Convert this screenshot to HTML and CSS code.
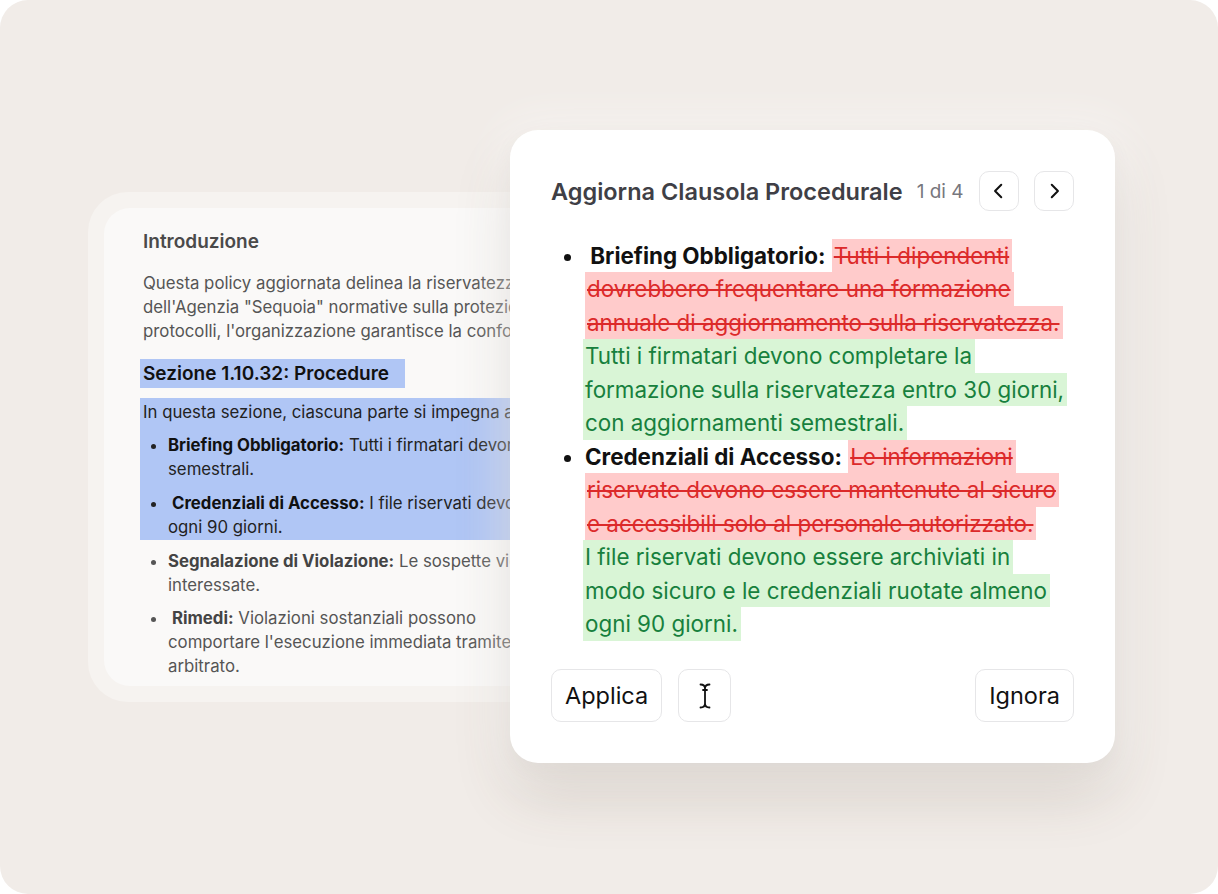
FILE: index.html
```html
<!DOCTYPE html>
<html lang="it">
<head>
<meta charset="utf-8">
<title>Aggiorna Clausola Procedurale</title>
<link rel="stylesheet" href="styles.css">
</head>
<body>
<div class="stage">
  <div class="doc-halo">
    <div class="doc">
      <h3 class="doc-title">Introduzione</h3>
      <p class="doc-p">Questa policy aggiornata delinea la riservatezza dei dati e gli obblighi<br>dell'Agenzia "Sequoia" normative sulla protezione delle informazioni. Con questi<br>protocolli, l'organizzazione garantisce la conformità alle norme vigenti.</p>
      <div class="sel-head">Sezione 1.10.32: Procedure</div>
      <div class="sel-block">
        <p class="doc-line">In questa sezione, ciascuna parte si impegna a rispettare le seguenti regole:</p>
        <ul class="doc-list">
          <li><b>Briefing Obbligatorio:</b> Tutti i firmatari devono completare la formazione<br>semestrali.</li>
          <li><b>&nbsp;Credenziali di Accesso:</b> I file riservati devono essere archiviati in modo<br>ogni 90 giorni.</li>
        </ul>
      </div>
      <ul class="doc-list muted">
        <li><b>Segnalazione di Violazione:</b> Le sospette violazioni devono essere notificate<br>interessate.</li>
        <li><b>&nbsp;Rimedi:</b> Violazioni sostanziali possono<br>comportare l'esecuzione immediata tramite un<br>arbitrato.</li>
      </ul>
    </div>
  </div>

  <div class="modal">
    <div class="modal-head">
      <h2 class="modal-title">Aggiorna Clausola Procedurale</h2>
      <span class="counter">1 di 4</span>
      <div class="nav">
        <button class="icon-btn" aria-label="Precedente">
          <svg width="18" height="18" viewBox="0 0 16 16"><path d="M10 2.5 L4.5 8 L10 13.5" fill="none" stroke="#111" stroke-width="1.8" stroke-linecap="round" stroke-linejoin="round"/></svg>
        </button>
        <button class="icon-btn" aria-label="Successivo">
          <svg width="18" height="18" viewBox="0 0 16 16"><path d="M6 2.5 L11.5 8 L6 13.5" fill="none" stroke="#111" stroke-width="1.8" stroke-linecap="round" stroke-linejoin="round"/></svg>
        </button>
      </div>
    </div>

    <ul class="diff-list">
      <li><b>&nbsp;Briefing Obbligatorio:</b> <span class="del">Tutti i dipendenti dovrebbero frequentare una formazione annuale di aggiornamento sulla riservatezza.</span><br><span class="ins">Tutti i firmatari devono completare la formazione sulla riservatezza entro 30 giorni, con aggiornamenti semestrali.</span></li>
      <li><b>Credenziali di Accesso:</b> <span class="del">Le informazioni riservate devono essere mantenute al sicuro e accessibili solo al personale autorizzato.</span><br><span class="ins">I file riservati devono essere archiviati in modo sicuro e le credenziali ruotate almeno ogni 90 giorni.</span></li>
    </ul>

    <div class="modal-foot">
      <button class="btn">Applica</button>
      <button class="btn btn-icon" aria-label="Modifica testo">
        <svg width="24" height="30" viewBox="0 0 24 30"><path d="M7.5 3.5 C10.5 3.5 12 4.8 12 7.5 M16.5 3.5 C13.5 3.5 12 4.8 12 7.5 M12 7.5 L12 22.5 M12 22.5 C12 25.2 10.5 26.5 7.5 26.5 M12 22.5 C12 25.2 13.5 26.5 16.5 26.5 M10 9 L14 9" fill="none" stroke="#111" stroke-width="1.8" stroke-linecap="round"/></svg>
      </button>
      <button class="btn btn-right">Ignora</button>
    </div>
  </div>
</div>
</body>
</html>
```

FILE: styles.css
```css
* { box-sizing: border-box; }

html, body {
  margin: 0;
  padding: 0;
  background: #ffffff;
}

body {
  font-family: Inter, "Noto Sans", "Liberation Sans", sans-serif;
}

.stage {
  position: relative;
  width: 1218px;
  height: 894px;
  background: #f1ece8;
  border-radius: 28px;
  overflow: hidden;
  padding: 192px 0 0 88px;
}

/* ---------- background document card ---------- */
.doc-halo {
  width: 640px;
  padding: 16px;
  border-radius: 40px;
  background: #f6f3f0;
}

.doc {
  height: 478px;
  overflow: hidden;
  border-radius: 26px;
  background: #faf9f8;
  padding: 22px 0 0 39px;
  font-size: 16.8px;
  line-height: 24px;
  color: #555555;
  white-space: nowrap;
}

.doc-title {
  margin: 0;
  font-size: 19px;
  font-weight: 600;
  line-height: 24px;
  color: #4a4a4a;
}

.doc-p {
  margin: 17px 0 0;
}

.sel-head {
  display: inline-block;
  margin: 16px 0 0 -3px;
  padding: 2px 16px 3px 3px;
  height: 29px;
  background: #b0c6f5;
  color: #111111;
  font-size: 19px;
  font-weight: 600;
  line-height: 25px;
}

.sel-block {
  margin: 10px 0 0 -3px;
  padding: 2px 0 1px 3px;
  background: #b0c6f5;
  color: #222222;
}

.doc-line {
  margin: 0;
}

.doc-list {
  margin: 9px 0 0;
  padding: 0 0 0 25px;
}

.doc-list li + li {
  margin-top: 10px;
}

.doc-list b {
  font-weight: 700;
  color: #111111;
}

.doc-list.muted {
  color: #555555;
}

.doc-list.muted li + li {
  margin-top: 9px;
}

.doc-list.muted b {
  color: #444444;
}

/* ---------- modal ---------- */
.modal {
  position: absolute;
  left: 510px;
  top: 130px;
  width: 605px;
  height: 633px;
  padding: 41px 41px 41px 41px;
  background: #ffffff;
  border-radius: 28px;
  display: flex;
  flex-direction: column;
  box-shadow:
    0 0 40px 12px rgba(255, 255, 255, 0.45),
    0 32px 60px -4px rgba(90, 70, 50, 0.2),
    0 6px 18px rgba(90, 70, 50, 0.07);
}

.modal-head {
  display: flex;
  align-items: center;
  height: 40px;
}

.modal-title {
  margin: 0;
  font-size: 23.5px;
  font-weight: 600;
  color: #3f3f46;
}

.counter {
  margin-left: 14px;
  font-size: 19px;
  color: #77777e;
}

.nav {
  display: flex;
  gap: 15px;
  margin-left: 15px;
}

.icon-btn {
  width: 40px;
  height: 40px;
  padding: 0;
  border: 1.5px solid #e6e6e8;
  border-radius: 10px;
  background: #ffffff;
  display: flex;
  align-items: center;
  justify-content: center;
}

.diff-list {
  flex: 1;
  margin: 28px 0 0;
  padding: 0 0 0 34px;
  font-size: 22.4px;
  line-height: 33.5px;
  color: #111111;
}

.diff-list b {
  font-weight: 700;
}

.del,
.ins {
  padding: 3.3px 3px 3.3px 2px;
  -webkit-box-decoration-break: clone;
  box-decoration-break: clone;
}

.del {
  background: #ffcbcb;
  color: #dc2a2a;
  text-decoration: line-through;
  text-decoration-thickness: 1.5px;
}

.ins {
  margin-left: -2px;
  background: #d9f5d6;
  color: #17803d;
}

.modal-foot {
  display: flex;
  gap: 16px;
  margin-top: 28px;
}

.btn {
  height: 53px;
  padding: 0 13px;
  border: 1.5px solid #e6e6e8;
  border-radius: 10px;
  background: #ffffff;
  font-family: Inter, "Noto Sans", "Liberation Sans", sans-serif;
  font-size: 23.5px;
  color: #111111;
  display: flex;
  align-items: center;
  justify-content: center;
}

.btn-icon {
  width: 53px;
  padding: 0;
}

.btn-right {
  margin-left: auto;
}
```
